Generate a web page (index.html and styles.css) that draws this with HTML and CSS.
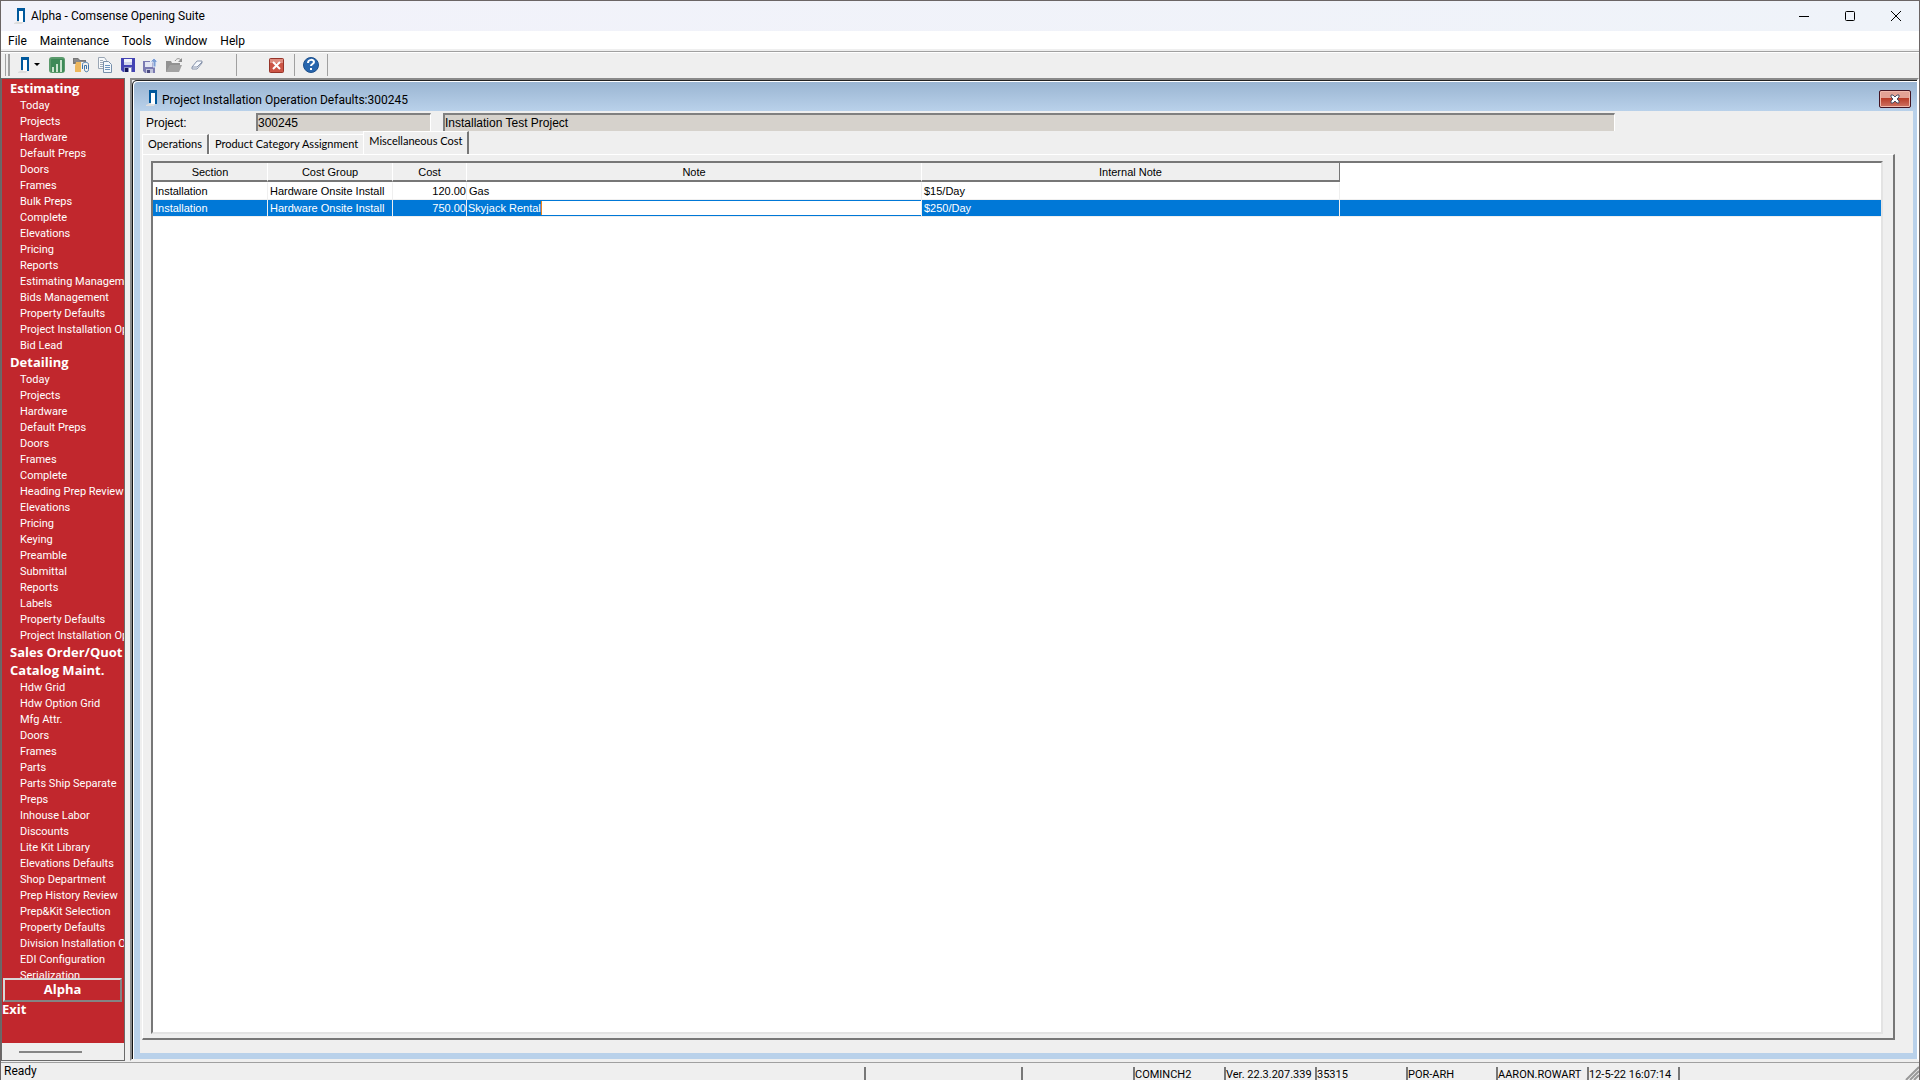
FILE: index.html
```html
<!DOCTYPE html>
<html lang="en">
<head>
<meta charset="utf-8">
<title>Alpha - Comsense Opening Suite</title>
<link rel="stylesheet" href="styles.css">
</head>
<body>
<svg width="0" height="0" class="defs">
  <symbol id="door" viewBox="0 0 14 16">
    <path d="M0 15l4-2h6l-2 3H0z" fill="#ddd"/>
    <path d="M3 0h8v14H9V3H5v10H3z" fill="#00589c"/>
    <path d="M5 3h4v11H5z" fill="#fff"/>
  </symbol>
</svg>

<div class="window">
  <header class="titlebar">
    <svg class="door"><use href="#door"/></svg>
    <h1>Alpha - Comsense Opening Suite</h1>
    <div class="winbuttons">
      <button aria-label="Minimize"><svg width="12" height="12"><path d="M1 6.500h10" stroke="#000"/></svg></button>
      <button aria-label="Maximize"><svg width="12" height="12"><rect x="1.500" y="1.500" width="9" height="9" rx="1" fill="none" stroke="#000"/></svg></button>
      <button aria-label="Close"><svg width="12" height="12"><path d="M1 1l10 10M11 1L1 11" stroke="#000"/></svg></button>
    </div>
  </header>

  <nav class="menubar">
    <button>File</button>
    <button>Maintenance</button>
    <button>Tools</button>
    <button>Window</button>
    <button>Help</button>
  </nav>

  <div class="toolbar">
    <span class="grip"></span>
    <button aria-label="Opening" class="drop">
      <svg class="door"><use href="#door"/></svg>
      <svg width="6" height="4"><path d="M0 0h6L3 3z" fill="#000"/></svg>
    </button>
    <button aria-label="Report"><svg width="16" height="16"><rect width="16" height="16" rx="3" fill="#5b9a6c"/><rect x="2" y="2" width="13" height="13" rx="1" fill="#3d8a57"/><path d="M3 10h2v5H3zM7 7h2v8H7zM11 3h2v12h-2z" fill="#c9e3cd"/></svg></button>
    <button aria-label="Attachments"><svg width="17" height="16"><path d="M0 1h5l2 2h6v4H0z" fill="#777"/><path d="M1 2h4l2 2h5v1H1z" fill="#8a8a8a"/><path d="M3 5h10v10H2V9z" fill="#edb75c"/><path d="M8 5h9v11H8z" fill="#f3f1ec"/><path d="M9.500 12V7.500c0-3 6-3 6 0v5c0 3-4 3-4 0V8.500h2V12" fill="none" stroke="#3f76aa"/></svg></button>
    <button aria-label="Copy"><svg width="15" height="16"><path d="M.5 .5h6l2 3v8h-8z" fill="#f7f9fb" stroke="#9aa6b4"/><path d="M2 3.500h3M2 5.500h4M2 7.500h3M2 9.500h3" stroke="#9eaab8"/><path d="M5.500 4.500h5l3 3v8h-8z" fill="#f4f8fc" stroke="#7890ab"/><path d="M7 8.500h5M7 10.500h5M7 12.500h5" stroke="#6c94bd"/></svg></button>
    <button aria-label="Save"><svg width="14" height="14"><path d="M0 0h14v14H2l-2-2z" fill="#4444b4"/><path d="M3 1h8v6H3z" fill="#f1f3fb"/><path d="M3 4h8v3H3z" fill="#d2d6ee"/><path d="M3 9h8v5H3z" fill="#8b90c4"/><path d="M4 10h3v4H4z" fill="#161658"/><path d="M8 10h2v4H8z" fill="#fff"/></svg></button>
    <button aria-label="Save and close"><svg width="15" height="15"><path d="M0 3h12v12H2l-2-2z" fill="#7b7bb2"/><path d="M2 4h7v5H2z" fill="#e4e6f3"/><path d="M3 11h7v4H3z" fill="#c0c3db"/><path d="M4 12h3v3H4z" fill="#4a4a80"/><path d="M11 0l4 4h-2v5h-3V4H7z" fill="#7e9fd4" stroke="#e8edf7"/></svg></button>
    <button aria-label="Open"><svg width="17" height="14"><path d="M0 3h5l1 2h8v3H4l-3 6H0z" fill="#929292"/><path d="M4 7h12l-3 7H0z" fill="#a2a2a2"/><path d="M9 3c2-3 4-3 6-1" fill="none" stroke="#8f8f8f"/><path d="M16 0v4h-4z" fill="#8f8f8f"/></svg></button>
    <button aria-label="Erase"><svg width="12" height="12"><path d="M1 8l5-6h5v2l-5 6H1z" fill="#f5f8fd" stroke="#8995ac"/><path d="M1 8h5l5-5" fill="none" stroke="#8995ac"/></svg></button>
    <span class="sep wide"></span>
    <button aria-label="Close window" class="far"><svg width="15" height="15"><rect x=".5" y=".5" width="14" height="14" rx="1" fill="#cc5546" stroke="#963429"/><path d="M1 1h13v4H1z" fill="#df8d80"/><path d="M4 4l7 7M11 4l-7 7" stroke="#fff" stroke-width="2"/></svg></button>
    <span class="sep second"></span>
    <button aria-label="Help"><svg width="16" height="16"><circle cx="8" cy="8" r="7.500" fill="#2866ae" stroke="#1d4f8b"/><path d="M5 6c0-4 6-4 6-1 0 2-3 2-3 4" fill="none" stroke="#fff" stroke-width="2"/><path d="M7 11h2v2H7z" fill="#fff"/></svg></button>
    <span class="sep"></span>
  </div>

  <div class="main">
    <aside class="sidebar">
      <div class="outline">
        <h2>Estimating</h2>
        <ul>
          <li><a href="#">Today</a></li>
          <li><a href="#">Projects</a></li>
          <li><a href="#">Hardware</a></li>
          <li><a href="#">Default Preps</a></li>
          <li><a href="#">Doors</a></li>
          <li><a href="#">Frames</a></li>
          <li><a href="#">Bulk Preps</a></li>
          <li><a href="#">Complete</a></li>
          <li><a href="#">Elevations</a></li>
          <li><a href="#">Pricing</a></li>
          <li><a href="#">Reports</a></li>
          <li><a href="#">Estimating Manageme</a></li>
          <li><a href="#">Bids Management</a></li>
          <li><a href="#">Property Defaults</a></li>
          <li><a href="#">Project Installation Op</a></li>
          <li><a href="#">Bid Lead</a></li>
        </ul>
        <h2>Detailing</h2>
        <ul>
          <li><a href="#">Today</a></li>
          <li><a href="#">Projects</a></li>
          <li><a href="#">Hardware</a></li>
          <li><a href="#">Default Preps</a></li>
          <li><a href="#">Doors</a></li>
          <li><a href="#">Frames</a></li>
          <li><a href="#">Complete</a></li>
          <li><a href="#">Heading Prep Review</a></li>
          <li><a href="#">Elevations</a></li>
          <li><a href="#">Pricing</a></li>
          <li><a href="#">Keying</a></li>
          <li><a href="#">Preamble</a></li>
          <li><a href="#">Submittal</a></li>
          <li><a href="#">Reports</a></li>
          <li><a href="#">Labels</a></li>
          <li><a href="#">Property Defaults</a></li>
          <li><a href="#">Project Installation Op</a></li>
        </ul>
        <h2>Sales Order/Quot</h2>
        <h2>Catalog Maint.</h2>
        <ul>
          <li><a href="#">Hdw Grid</a></li>
          <li><a href="#">Hdw Option Grid</a></li>
          <li><a href="#">Mfg Attr.</a></li>
          <li><a href="#">Doors</a></li>
          <li><a href="#">Frames</a></li>
          <li><a href="#">Parts</a></li>
          <li><a href="#">Parts Ship Separate</a></li>
          <li><a href="#">Preps</a></li>
          <li><a href="#">Inhouse Labor</a></li>
          <li><a href="#">Discounts</a></li>
          <li><a href="#">Lite Kit Library</a></li>
          <li><a href="#">Elevations Defaults</a></li>
          <li><a href="#">Shop Department</a></li>
          <li><a href="#">Prep History Review</a></li>
          <li><a href="#">Prep&amp;Kit Selection</a></li>
          <li><a href="#">Property Defaults</a></li>
          <li><a href="#">Division Installation O</a></li>
          <li><a href="#">EDI Configuration</a></li>
          <li><a href="#">Serialization</a></li>
        </ul>
      </div>
      <button class="alpha">Alpha</button>
      <a href="#" class="exit">Exit</a>
      <div class="scroll"><span></span></div>
    </aside>

    <section class="mdi">
      <div class="child">
        <header class="childbar">
          <svg class="door"><use href="#door"/></svg>
          <h2>Project Installation Operation Defaults:300245</h2>
          <button class="childclose" aria-label="Close"><svg width="12" height="10"><path d="M2 1h2l2 2 2-2h2v2L8 5l2 2v2H8L6 7 4 9H2V7l2-2-2-2z" fill="#fff" stroke="#4d4f63"/></svg></button>
        </header>
        <div class="form">
          <div class="fields">
            <label for="project">Project:</label>
            <input id="project" class="number" value="300245" readonly>
            <input class="name" aria-label="Project name" value="Installation Test Project" readonly>
          </div>
          <div class="tabs" role="tablist">
            <button role="tab">Operations</button>
            <button role="tab" class="middle">Product Category Assignment</button>
            <button role="tab" class="active" aria-selected="true">Miscellaneous Cost</button>
          </div>
          <div class="panel">
            <div class="grid">
              <table>
                <colgroup>
                  <col class="c-section"><col class="c-group"><col class="c-cost"><col class="c-note"><col class="c-internal"><col>
                </colgroup>
                <thead>
                  <tr><th>Section</th><th>Cost Group</th><th>Cost</th><th>Note</th><th>Internal Note</th><td></td></tr>
                </thead>
                <tbody>
                  <tr><td>Installation</td><td>Hardware Onsite Install</td><td class="num">120.00</td><td>Gas</td><td>$15/Day</td><td></td></tr>
                  <tr class="selected"><td>Installation</td><td>Hardware Onsite Install</td><td class="num">750.00</td><td class="edit"><div contenteditable="true" role="textbox" aria-label="Note"><mark>Skyjack Rental</mark></div></td><td>$250/Day</td><td></td></tr>
                </tbody>
              </table>
            </div>
          </div>
        </div>
      </div>
    </section>
  </div>

  <footer class="statusbar">
    <span class="ready">Ready</span>
    <span class="s-blank"></span>
    <span class="s-gap"></span>
    <span class="s-host">COMINCH2</span>
    <span class="s-ver">Ver. 22.3.207.339</span>
    <span class="s-build">35315</span>
    <span class="s-site">POR-ARH</span>
    <span class="s-user">AARON.ROWART</span>
    <span class="s-time">12-5-22 16:07:14</span>
    <span class="s-end"></span>
    <svg class="sizer" width="14" height="14"><path d="M1 14L14 1M5 14l9-9M9 14l5-5" stroke="#999" stroke-width="2"/></svg>
  </footer>
</div>
</body>
</html>
```
FILE: styles.css
```css
* { box-sizing: border-box; }

body {
  margin: 0;
  background: #efefef;
  color: #000;
  font: 12px/16px "Liberation Sans", Arial, sans-serif;
}

h1, h2, ul { margin: 0; padding: 0; }
ul { list-style: none; }
a { color: inherit; text-decoration: none; }
button { font: inherit; color: inherit; background: none; border: 0; padding: 0; }
svg { display: block; }
.defs { position: absolute; }
.door { width: 14px; height: 16px; flex: none; }

.window {
  display: flex;
  flex-direction: column;
  height: 100vh;
  border: 1px solid #6b6565;
  border-bottom: 0;
  overflow: hidden;
}

/* title bar and menu */
.titlebar {
  display: flex;
  align-items: center;
  height: 30px;
  flex: none;
  padding-left: 13px;
  background: linear-gradient(to right, #f2f2fa, #eff3f9);
}
.titlebar h1, .childbar h2 {
  font: 12px/16px Roboto, "Segoe UI", sans-serif;
}
.titlebar h1 { margin-left: 3px; }
.winbuttons { display: flex; margin-left: auto; }
.winbuttons button { width: 46px; height: 28px; display: grid; place-items: center; }

.menubar {
  display: flex;
  gap: 13px;
  height: 20px;
  flex: none;
  padding-left: 7px;
  background: #fff;
  border-bottom: 2px solid #efefef;
  font: 12px/20px Roboto, "Segoe UI", sans-serif;
}

/* toolbar */
.toolbar {
  display: flex;
  align-items: center;
  gap: 8px;
  height: 27px;
  flex: none;
  padding-left: 4px;
  border-top: 1px solid #a0a0a0;
  box-shadow: inset 0 1px #fff;
}
.grip {
  width: 5px;
  height: 22px;
  border: 1px solid #a0a0a0;
  border-width: 0 2px 0 1px;
}
.drop { display: flex; gap: 2px; align-items: center; margin-right: 1px; }
.sep { width: 1px; height: 22px; background: #a0a0a0; }
.wide { margin-left: 25px; }
.far { margin-left: 24px; }
.second { margin-left: 2px; }

.main { display: flex; flex: 1; min-height: 0; }

/* outline */
.sidebar {
  display: flex;
  flex-direction: column;
  width: 124px;
  flex: none;
  margin-right: 5px;
  border: 1px solid #6a6a6a;
  background: #c1272d;
  color: #fff;
  font: 11px/18px Roboto, Tahoma, sans-serif;
  overflow: hidden;
}
.outline { flex: 1; overflow: hidden; white-space: nowrap; }
.outline h2, .alpha, .exit { font: bold 13px/18px "Open Sans", Tahoma, sans-serif; }
.outline h2 { padding-left: 8px; }
.outline li { padding-left: 18px; height: 16px; }
.alpha {
  height: 24px;
  flex: none;
  margin: 0 2px 0 1px;
  padding-bottom: 4px;
  border: 2px outset #d8d8d8;
}
.exit { height: 41px; flex: none; line-height: 14px; }
.scroll { height: 17px; flex: none; background: #efefef; padding: 8px 17px; }
.scroll span { display: block; width: 63px; height: 2px; background: #858585; }

/* child window */
.mdi {
  flex: 1;
  min-width: 0;
  display: flex;
  border: 2px solid #808080;
  border-color: #8a8a8a #fff #efefef #8a8a8a;
}
.child {
  flex: 1;
  min-width: 0;
  display: flex;
  flex-direction: column;
  padding: 0 4px 6px 7px;
  border-left: 1px solid #111;
  border-top: 1px solid #222;
  box-shadow: inset 1px 1px #fff;
  border-radius: 5px 0 0 0;
  background: linear-gradient(#99b4d1, #b9d1ea 30px);
}
.childbar {
  display: flex;
  align-items: center;
  height: 30px;
  flex: none;
  padding: 4px 0 0 6px;
}
.childbar h2 { margin-left: 2px; padding-top: 4px; }
.childclose {
  display: grid;
  place-items: center;
  width: 32px;
  height: 18px;
  margin: 1px 2px 0 auto;
  border: 1px solid #431422;
  border-radius: 2px;
  box-shadow: inset 0 0 0 1px #f0b9ac;
  background: linear-gradient(#e3a295 45%, #b83c28 46%, #cf7463);
}
.form {
  flex: 1;
  display: flex;
  flex-direction: column;
  padding: 2px 18px 13px 2px;
  background: #efefef;
  min-height: 0;
}
.fields { display: flex; height: 18px; padding-left: 4px; }
.fields label { width: 110px; line-height: 20px; }
.fields input {
  height: 18px;
  padding: 0;
  border: 0 solid #808080;
  border-width: 2px 0 0 2px;
  border-right: 1px solid #fff;
  background: #d6d2cc;
  font: inherit;
}
.number { width: 175px; margin-right: 12px; }
.name { width: 67%; }

.tabs { display: flex; align-items: flex-end; height: 23px; font: 11px/16px Lato, sans-serif; }
.tabs button {
  height: 20px;
  padding: 0 5px 2px;
  border: 1px solid #fff;
  border-right: 2px solid #777;
  border-bottom: 0;
}
.tabs .middle { border-right: 0; }
.tabs .active { height: 23px; padding-bottom: 4px; }
.panel {
  flex: 1;
  display: flex;
  padding: 6px 10px 4px 8px;
  border: 1px solid #fff;
  border-right: 2px solid #777;
  border-bottom: 2px solid #777;
}
.grid {
  flex: 1;
  background: #fff;
  border: 2px solid #777;
  border-right-color: #e3e3e3;
  border-bottom-color: #e3e3e3;
}

table { width: 100%; table-layout: fixed; border-collapse: separate; border-spacing: 0; font-size: 11px; line-height: 16px; }
.c-section { width: 115px; }
.c-group { width: 125px; }
.c-cost { width: 74px; }
.c-note { width: 455px; }
.c-internal { width: 418px; }
th {
  height: 19px;
  padding: 1px 0 0;
  font-weight: normal;
  background: #efefef;
  border-right: 1px solid #fff;
  border-bottom: 2px solid #777;
}
th:nth-child(5) { border-right: 1px solid #777; }
tbody td {
  height: 17px;
  padding: 0 0 0 2px;
  white-space: nowrap;
  border-right: 1px solid #efefef;
  border-bottom: 1px solid #efefef;
}
tbody tr:first-child td { border-top: 1px solid #fff; }
td.num { text-align: right; }
tbody td:last-child { border-right: 0; }
.selected td { background: #0078d7; color: #fff; }
.selected td.edit { padding: 0; }
.edit div { height: 16px; background: #fff; border: 1px solid #0078d7; border-width: 1px 0; line-height: 14px; outline: 0; }
.edit mark { display: inline-block; height: 14px; padding-left: 1px; background: #0078d7; color: #fff; border-right: 1px solid #e8851c; }

/* status bar */
.statusbar {
  display: flex;
  height: 18px;
  flex: none;
  margin-top: 1px;
  padding-left: 3px;
  border-top: 1px solid #a0a0a0;
  font: 11px/16px Roboto, sans-serif;
  white-space: nowrap;
}
.statusbar span { border-left: 2px solid #777; height: 14px; margin-top: 4px; line-height: 15px; }
.statusbar .ready { border: 0; flex: 1; margin-top: 1px; font-size: 12px; }
.s-blank { width: 157px; }
.s-gap { width: 112px; }
.s-host { width: 91px; }
.s-ver { width: 91px; }
.s-build { width: 91px; }
.s-site { width: 90px; }
.s-user { width: 91px; }
.s-time { width: 91px; }
.s-end { width: 227px; }
.sizer { margin: 3px 0 0 auto; }
```
